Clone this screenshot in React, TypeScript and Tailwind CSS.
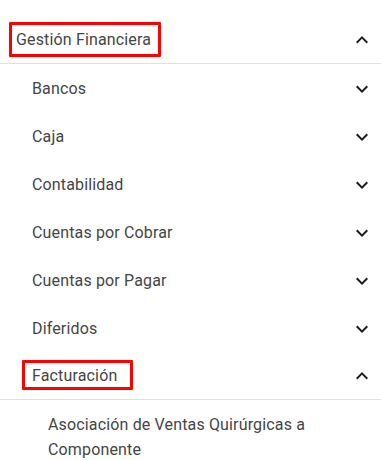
import React from 'react';

const children = [
    'Bancos',
    'Caja',
    'Contabilidad',
    'Cuentas por Cobrar',
    'Cuentas por Pagar',
    'Diferidos',
];

function Chevron({ up }: { up?: boolean }) {
    return (
        <svg viewBox="0 0 24 24" className="w-6 h-6 fill-[#1f1f1f] shrink-0">
            {up ? (
                <path d="M12 8l-6 6 1.41 1.41L12 10.83l4.59 4.58L18 14z" />
            ) : (
                <path d="M16.59 8.59L12 13.17 7.41 8.59 6 10l6 6 6-6z" />
            )}
        </svg>
    );
}

export default function App() {
    return (
        <div className="w-[381px] h-[460px] overflow-hidden bg-white pt-4 text-[16px] tracking-[0.15px] text-[#454545]" style={{ fontFamily: 'Roboto, "Liberation Sans", sans-serif' }}>
            {/* Gestión Financiera (open) */}
            <div className="h-12 flex items-center justify-between pl-4 pr-[7px] border-b border-[#e0e0e0]">
                <span className="relative leading-6">
                    Gestión Financiera
                    <span className="absolute -left-[7px] -right-[10px] -top-[6px] -bottom-[5px] border-[3px] border-[#ff0000] rounded-[1px]" />
                </span>
                <Chevron up />
            </div>

            {children.map((name) => (
                <div key={name} className="h-12 flex items-center justify-between pl-8 pr-[7px] pt-px">
                    <span className="leading-6">{name}</span>
                    <Chevron />
                </div>
            ))}

            {/* Facturación (open) */}
            <div className="h-12 flex items-center justify-between pl-8 pr-[7px] pt-px border-b border-[#e0e0e0]">
                <span className="relative leading-6">
                    Facturación
                    <span className="absolute -left-[10px] -right-[16px] -top-[4px] -bottom-[2px] border-[3px] border-[#ff0000] rounded-[1px]" />
                </span>
                <Chevron up />
            </div>

            <div className="pl-12 pr-4 pt-3 leading-[25px]">
                Asociación de Ventas Quirúrgicas a Componente
            </div>
        </div>
    );
}
